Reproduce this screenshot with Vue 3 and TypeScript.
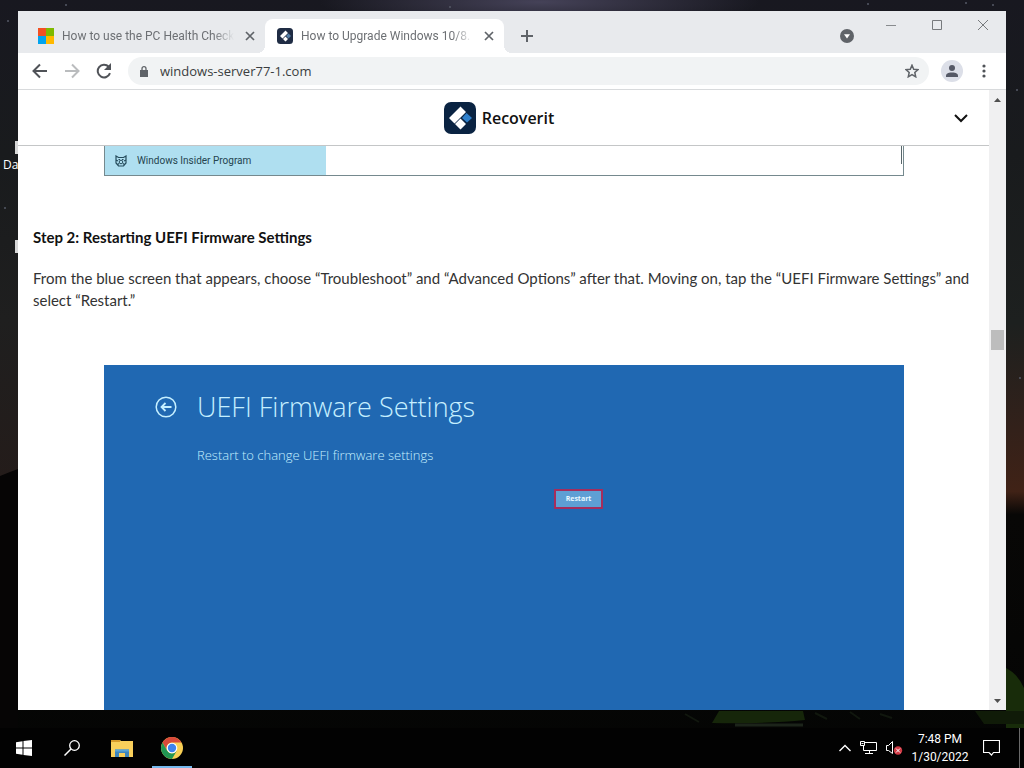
<script setup lang="ts">
import { ref } from 'vue'

interface Tab {
  id: number
  title: string
  icon: 'microsoft' | 'recoverit'
}

const tabs: Tab[] = [
  { id: 1, title: 'How to use the PC Health Check', icon: 'microsoft' },
  { id: 2, title: 'How to Upgrade Windows 10/8.', icon: 'recoverit' },
]
const activeTab = ref(2)
const address = ref('windows-server77-1.com')
</script>

<template>
  <div class="desktop">
    <svg class="scenery" viewBox="0 0 1024 768" preserveAspectRatio="none" aria-hidden="true">
      <defs>
        <linearGradient id="sky" x1="0" y1="0" x2="0" y2="1">
          <stop offset="0" stop-color="#181820" />
          <stop offset="0.2" stop-color="#191b1d" />
          <stop offset="0.42" stop-color="#1d201f" />
          <stop offset="0.56" stop-color="#33211a" />
          <stop offset="0.64" stop-color="#402216" />
          <stop offset="0.67" stop-color="#080706" />
          <stop offset="1" stop-color="#040504" />
        </linearGradient>
        <linearGradient id="dusk" x1="0" y1="0" x2="0" y2="1">
          <stop offset="0" stop-color="#191b1d" />
          <stop offset="0.5" stop-color="#1f1f1f" />
          <stop offset="1" stop-color="#241c1a" />
        </linearGradient>
        <radialGradient id="milky">
          <stop offset="0" stop-color="#454258" />
          <stop offset="1" stop-color="#454258" stop-opacity="0" />
        </radialGradient>
      </defs>
      <rect width="1024" height="768" fill="url(#sky)" />
      <ellipse cx="540" cy="2" rx="220" ry="28" fill="url(#milky)" />
      <path d="M0 160h18v320H0z" fill="url(#dusk)" />
      <path d="M0 476l10-4 8-3v299H0z" fill="#060505" />
      <path d="M1006 668q12 6 18 20v40h-18z" fill="#182c0a" />
      <path d="M719 711h84l2 9q-40 4-93 3z" fill="#16260a" />
      <path d="M975 711h49v13h-40z" fill="#101b08" />
      <path d="M735 725h68" stroke="#1c241a" stroke-width="3" />
      <path d="M685 714l14 8M815 713l12 6M850 712l10 7M880 714l12 4" stroke="#11170e" stroke-width="2" />
      <g fill="#555866">
        <circle cx="8" cy="21" r="1" /><circle cx="66" cy="5" r="1" /><circle cx="868" cy="4" r="1" />
        <circle cx="993" cy="5" r="1" /><circle cx="1017" cy="90" r="1" /><circle cx="5" cy="208" r="1" />
        <circle cx="1020" cy="378" r="1" /><circle cx="966" cy="3" r="1" /><circle cx="450" cy="7" r="1" />
      </g>
      <path d="M15 141h3v13h-3zM15 240h3v13h-3z" fill="#d8d8d8" />
    </svg>
    <span class="shortcut">Da</span>

    <main class="window">
      <header class="tabstrip">
        <div class="tabs" role="tablist">
          <div v-for="tab in tabs" :key="tab.id" class="tab" :class="{ active: tab.id === activeTab }">
            <button class="tab-main" role="tab" :aria-selected="tab.id === activeTab" @click="activeTab = tab.id">
              <svg v-if="tab.icon === 'microsoft'" width="16" height="16" viewBox="0 0 16 16">
                <path d="M0 0h8v8H0z" fill="#f25022" /><path d="M8 0h8v8H8z" fill="#7fba00" />
                <path d="M0 8h8v8H0z" fill="#00a4ef" /><path d="M8 8h8v8H8z" fill="#ffb900" />
              </svg>
              <svg v-else width="16" height="16" viewBox="0 0 32 32">
                <rect width="32" height="32" rx="7" fill="#1f2c44" />
                <path d="M6 16 17 5l5 5-11 11zM12 22l5-5 5 5-5 5z" fill="#fff" />
                <path d="m18 16 5-5 5 5-5 5z" fill="#567ea5" />
              </svg>
              <span class="tab-title">{{ tab.title }}</span>
            </button>
            <button class="tab-close" aria-label="Close tab">
              <svg width="10" height="10" viewBox="0 0 10 10"><path d="m1 1 8 8M9 1 1 9" stroke="#5f6368" stroke-width="1.7" /></svg>
            </button>
          </div>
        </div>
        <button class="newtab" aria-label="New tab">
          <svg width="12" height="12" viewBox="0 0 12 12"><path d="M6 0v12M0 6h12" stroke="#5f6368" stroke-width="2" /></svg>
        </button>
        <button class="search-tabs" aria-label="Search tabs">
          <svg width="14" height="14" viewBox="0 0 14 14"><circle cx="7" cy="7" r="7" fill="#5f6368" /><path d="M4 5.2h6L7 9.5z" fill="#fff" /></svg>
        </button>
        <div class="controls">
          <button aria-label="Minimize"><svg width="12" height="12" viewBox="0 0 12 12"><path d="M1 6.5h10" stroke="#888b8e" /></svg></button>
          <button aria-label="Maximize"><svg width="12" height="12" viewBox="0 0 12 12"><path d="M1.500 1.500h9v9h-9z" fill="none" stroke="#777a7d" /></svg></button>
          <button aria-label="Close"><svg width="12" height="12" viewBox="0 0 12 12"><path d="m1 1 10 10M11 1 1 11" stroke="#777a7d" /></svg></button>
        </div>
      </header>

      <nav class="toolbar">
        <button aria-label="Back"><svg width="16" height="16" viewBox="0 0 16 16"><path d="M15 8H2M8 1.500 1.500 8 8 14.500" fill="none" stroke="#505358" stroke-width="2" /></svg></button>
        <button aria-label="Forward"><svg width="16" height="16" viewBox="0 0 16 16"><path d="M1 8h13M8 1.500 14.500 8 8 14.500" fill="none" stroke="#babcbe" stroke-width="2" /></svg></button>
        <button aria-label="Reload"><svg width="16" height="16" viewBox="0 0 16 16"><path d="M14 10.200A6.300 6.300 0 1 1 12.700 3.800L14 5.200" fill="none" stroke="#505358" stroke-width="2" /><path d="M15 0v7H8z" fill="#505358" /></svg></button>
        <div class="omnibox">
          <svg width="8" height="11" viewBox="0 0 8 11"><path d="M0 4h8v7H0z" fill="#5f6368" /><path d="M2 4.500V2.700a2 2 0 0 1 4 0v1.800" fill="none" stroke="#5f6368" stroke-width="1.300" /></svg>
          <input v-model="address" type="text" aria-label="Address" />
          <button class="star" aria-label="Bookmark this page"><svg width="14" height="14" viewBox="0 0 14 14"><path d="m7 1.200 1.700 4 4.300.4-3.200 2.900.9 4.300L7 10.600l-3.700 2.200.9-4.300L1 5.600l4.300-.4z" fill="none" stroke="#5f6368" stroke-width="1.500" /></svg></button>
        </div>
        <button class="profile" aria-label="Profile"><svg width="12" height="12" viewBox="0 0 12 12"><circle cx="6" cy="3" r="3" fill="#555966" /><path d="M0 12v-1.500C0 8 4 7.500 6 7.500s6 .5 6 3V12z" fill="#555966" /></svg></button>
        <button aria-label="Menu"><svg width="4" height="14" viewBox="0 0 4 14"><g fill="#505358"><circle cx="2" cy="2" r="1.600" /><circle cx="2" cy="7" r="1.600" /><circle cx="2" cy="12" r="1.600" /></g></svg></button>
      </nav>

      <div class="viewport">
        <div class="page">
          <div class="sitebar">
            <a class="brand" href="#">
              <svg width="32" height="32" viewBox="0 0 32 32">
                <rect width="32" height="32" rx="7" fill="#0a2342" />
                <path d="m18 16 4.500-5 5.500 5-5 4.500z" fill="#2f80cc" />
                <path d="M5 16 16.500 4.500 22 10 10.500 21.500zM11 22l5.500-5.500 5.500 5.500-5.500 5.500z" fill="#fff" />
              </svg>
              <span>Recoverit</span>
            </a>
            <button class="expand" aria-label="Open menu"><svg width="14" height="9" viewBox="0 0 14 9"><path d="m1 1 6 6 6-6" fill="none" stroke="#111" stroke-width="2" /></svg></button>
          </div>
          <article class="content">
            <figure class="insider">
              <a class="insider-item" href="#">
                <svg width="12" height="12" viewBox="0 0 12 12"><path d="M1 1l2.500 1.500h5L11 1v7l-2.500 3h-5L1 8zM1 5l2 1M11 5 9 6M4 8.500 2 10M8 8.500l2 1.500" fill="none" stroke="#254c5c" stroke-width="1.200" /><circle cx="6" cy="7" r="1.800" fill="none" stroke="#254c5c" /><path d="M3.500 4.500h1.500M7 4.500h1.500" stroke="#254c5c" /></svg>
                <span>Windows Insider Program</span>
              </a>
              <div class="insider-pane"><i></i></div>
            </figure>
            <h2>Step 2: Restarting UEFI Firmware Settings</h2>
            <p>From the blue screen that appears, choose “Troubleshoot” and “Advanced Options” after that. Moving on, tap the “UEFI Firmware Settings” and select “Restart.”</p>
            <section class="uefi">
              <div class="uefi-head">
                <button class="uefi-back" aria-label="Back"><svg width="22" height="22" viewBox="0 0 22 22"><g fill="none" stroke="#c5efff"><circle cx="11" cy="11" r="9.800" stroke-width="1.500" /><path d="M16.500 11h-10M10.500 7l-4 4 4 4" stroke-width="1.800" /></g></svg></button>
                <h3>UEFI Firmware Settings</h3>
              </div>
              <p class="uefi-text">Restart to change UEFI firmware settings</p>
              <button class="restart">Restart</button>
            </section>
          </article>
        </div>
        <div class="scrollbar" aria-hidden="true">
          <svg width="7" height="4" viewBox="0 0 7 4"><path d="M0 4h7L3.500 0z" fill="#505050" /></svg>
          <div class="track"><div class="thumb"></div></div>
          <svg width="7" height="4" viewBox="0 0 7 4"><path d="M0 0h7L3.500 4z" fill="#505050" /></svg>
        </div>
      </div>
    </main>

    <footer class="taskbar">
      <button class="task" aria-label="Start"><svg width="16" height="16" viewBox="0 0 16 16"><path d="M0 2.200 6.500 1.300v6.200H0zM7.500 1.100 16 0v7.500H7.500zM0 8.500h6.500v6.200L0 13.800zM7.500 8.500H16V16l-8.500-1.100z" fill="#fff" /></svg></button>
      <button class="task" aria-label="Search"><svg width="16" height="16" viewBox="0 0 16 16"><circle cx="10.500" cy="5.500" r="4.800" fill="none" stroke="#fff" stroke-width="1.300" /><path d="M7 9 .5 15.500" stroke="#fff" stroke-width="1.500" /></svg></button>
      <button class="task wide" aria-label="File Explorer"><svg width="22" height="19" viewBox="0 0 22 19"><path d="M0 1h9l1 1h12v16H0z" fill="#f9cf5b" /><path d="M0 1h9v2H0z" fill="#d79b2b" /><path d="M4 18v-7.500h14V18h-4v-4H8v4z" fill="#3f86bd" /><path d="M4 10.500h14v2H4z" fill="#58a5d8" /></svg></button>
      <button class="task chrome" aria-label="Google Chrome"><svg width="22" height="22" viewBox="0 0 22 22"><circle cx="11" cy="11" r="11" fill="#f8cf55" /><path d="M1.500 5.500a11 11 0 0 1 19 0H11a5.500 5.500 0 0 0-4.800 8.200z" fill="#d9493a" /><path d="M1.500 5.500A11 11 0 0 0 11 22l4.800-8.300a5.500 5.500 0 0 1-9.600 0z" fill="#219653" /><circle cx="11" cy="11" r="5.300" fill="#fff" /><circle cx="11" cy="11" r="4.200" fill="#3e82ee" /></svg></button>
      <div class="tray">
        <button aria-label="Show hidden icons"><svg width="12" height="8" viewBox="0 0 12 8"><path d="m.5 7 5.500-5.500L11.500 7" fill="none" stroke="#fff" stroke-width="1.400" /></svg></button>
        <button aria-label="Network"><svg width="17" height="14" viewBox="0 0 17 14"><g fill="none" stroke="#fff"><path d="M5 1.500h11.500v8H3.500V5M9.500 9.500v3M5 12.500h8M.5.500h4v4h-4zM1.500 2.500h2" /></g></svg></button>
        <button aria-label="Volume muted"><svg width="17" height="14" viewBox="0 0 17 14"><path d="M.5 4.500h2l4-4v12l-4-3h-2z" fill="none" stroke="#fff" /><circle cx="12" cy="9.500" r="4.200" fill="#d23a45" /><path d="m10 7.500 4 4m0-4-4 4" stroke="#fff" /></svg></button>
        <button class="clock"><time>7:48 PM</time><time>1/30/2022</time></button>
        <button aria-label="Notifications"><svg width="17" height="16" viewBox="0 0 17 16"><path d="M.5.500h16v12h-6L8.500 15l-2.500-2.500H.5z" fill="none" stroke="#fff" stroke-width="1.200" /></svg></button>
        <i class="peek"></i>
      </div>
    </footer>
  </div>
</template>

<style>
html, body { margin: 0; background: #050505; }
</style>

<style scoped>
* { box-sizing: border-box; }
button { border: 0; padding: 0; background: none; font: inherit; color: inherit; display: flex; align-items: center; justify-content: center; }
svg { display: block; flex: none; }
.desktop { position: relative; height: 100vh; display: flex; flex-direction: column; overflow: hidden; font-family: "Open Sans", "Noto Sans", sans-serif; }
.scenery { position: absolute; inset: 0; width: 100%; height: 100%; }
.shortcut { position: absolute; left: 3px; top: 157px; color: #fff; font-size: 12px; line-height: 16px; }
.window { position: relative; flex: 1; min-height: 0; margin: 11px 18px 18px; background: #fff; display: flex; flex-direction: column; }
.tabstrip { height: 42px; background: #e8eaed; display: flex; align-items: center; flex: none; }
.tabs { display: flex; align-self: flex-end; padding-left: 8px; }
.tab { display: flex; align-items: center; width: 239px; height: 34px; padding: 0 7px 0 12px; color: #6d7074; border-radius: 8px 8px 0 0; position: relative; }
.tab.active { background: #fff; }
.tab.active::before, .tab.active::after { content: ""; position: absolute; bottom: 0; width: 8px; height: 8px; }
.tab.active::before { left: -8px; background: radial-gradient(circle at 0 0, transparent 8px, #fff 8px); }
.tab.active::after { right: -8px; background: radial-gradient(circle at 100% 0, transparent 8px, #fff 8px); }
.tab-main { flex: 1; min-width: 0; justify-content: flex-start; gap: 8px; height: 100%; }
.tab-title { flex: 1; overflow: hidden; white-space: nowrap; text-align: left; font: 12px/16px Roboto, "Open Sans", sans-serif; -webkit-mask-image: linear-gradient(90deg, #000 88%, transparent); mask-image: linear-gradient(90deg, #000 88%, transparent); }
.tab-close { width: 16px; height: 16px; margin-left: 8px; }
.newtab { width: 28px; height: 28px; margin: 8px 0 0 9px; }
.search-tabs { margin: 8px 7px 0 auto; width: 28px; height: 28px; }
.controls { display: flex; align-self: flex-start; }
.controls button { width: 46px; height: 28px; }
.toolbar { height: 37px; display: flex; align-items: center; gap: 16px; padding: 0 20px 0 14px; border-bottom: 1px solid #d8dadc; flex: none; background: #fff; }
.omnibox { flex: 1; height: 28px; display: flex; align-items: center; gap: 12px; border-radius: 14px; background: #f1f3f4; padding: 0 10px 0 12px; margin-right: -4px; }
.omnibox input { flex: 1; min-width: 0; border: 0; padding: 0; outline: 0; background: none; font: 13px/20px "Open Sans", "Noto Sans", sans-serif; color: #3a3d40; }
.profile { width: 22px; height: 22px; margin-right: 3px; border-radius: 50%; background: #dcdfe8; }
.viewport { flex: 1; min-height: 0; display: flex; }
.page { flex: 1; min-width: 0; display: flex; flex-direction: column; font-family: Lato, "Open Sans", sans-serif; }
.sitebar { height: 56px; flex: none; border-bottom: 1px solid #c4c6c7; display: flex; align-items: center; justify-content: center; position: relative; padding-right: 10px; }
.brand { display: flex; align-items: center; gap: 6px; color: #111; text-decoration: none; font: 600 16px/24px "Open Sans", sans-serif; padding-left: 1px; }
.expand { position: absolute; right: 18px; top: 18px; width: 20px; height: 20px; }
.content { flex: 1; min-height: 0; padding: 0 15px; overflow: hidden; display: flex; flex-direction: column; }
.insider { margin: 0 70px 0 71px; height: 30px; border: 1px solid #75898e; border-top: 0; display: flex; flex: none; }
.insider-item { width: 221px; background: #afdff0; color: #24444f; text-decoration: none; display: flex; align-items: center; gap: 10px; padding-left: 10px; font: 10px/14px Roboto, "Open Sans", sans-serif; }
.insider-pane { flex: 1; display: flex; justify-content: flex-end; padding-right: 1px; }
.insider-pane i { width: 1px; height: 18px; background: #58676b; }
h2 { margin: 49px 0 0; font: 700 15px/24px Lato, "Open Sans", sans-serif; color: #111; }
.content p { margin: 18px 0 0; font-size: 15px; line-height: 22px; color: #333; }
.uefi { margin: 54px 70px 0 71px; flex: 1; min-height: 0; background: #2068b2; color: #c5efff; padding: 22px 51px; font-family: "Open Sans", sans-serif; }
.uefi-head { display: flex; align-items: center; gap: 20px; }
h3 { margin: 0; font-weight: 300; font-size: 27px; line-height: 40px; }
.content .uefi-text { margin: 18px 0 0 42px; font-size: 13px; line-height: 20px; font-weight: 300; color: #c5efff; }
.restart { margin: 24px 0 0 399px; width: 49px; height: 20px; border: 2px solid #a62d5c; background: #5e9fd4; color: #e8f9ff; font-size: 7px; font-weight: 700; line-height: 10px; }
.scrollbar { width: 17px; background: #f0f0f1; display: flex; flex-direction: column; align-items: center; padding: 8px 0 7px; }
.track { flex: 1; align-self: stretch; display: flex; justify-content: center; align-items: flex-start; padding: 228px 2px 0; }
.thumb { width: 13px; height: 20px; background: #bdbdbd; }
.taskbar { position: relative; height: 40px; flex: none; background: #020202; color: #fff; display: flex; align-items: stretch; }
.task { width: 48px; }
.task.wide { width: 52px; }
.task.chrome { width: 40px; margin-left: 4px; border-bottom: 2px solid #76b9ed; padding-top: 2px; }
.tray { margin-left: auto; display: flex; align-items: stretch; gap: 9px; }
.clock { flex-direction: column; font: 12px/18px Roboto, "Open Sans", sans-serif; width: 56px; margin: 0 6px 0 0; }
.peek { width: 1px; background: #6a6a6a; margin: 0 4px 0 10px; }
</style>
